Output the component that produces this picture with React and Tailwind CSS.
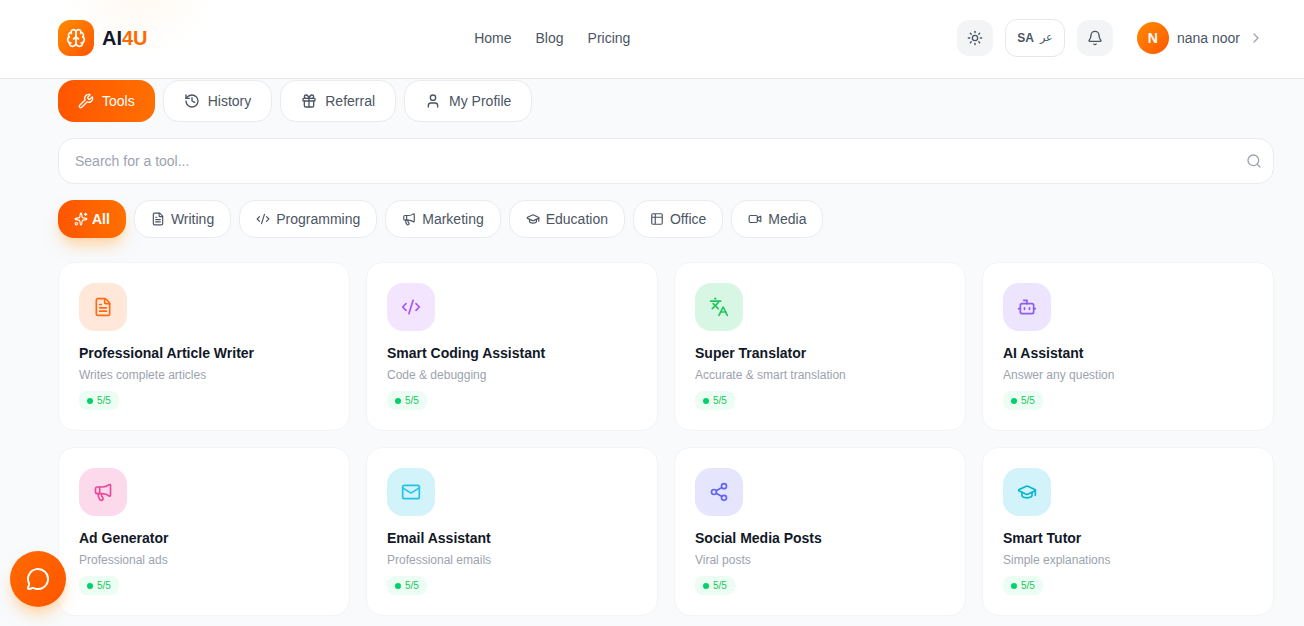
import React from "react";
import { Brain, Wrench, History, Gift, User, Search, Sparkles, FileText, CodeXml, Megaphone, GraduationCap, Table2, Video, Languages, Bot, Mail, Share2, MessageCircle, Sun, Bell, ChevronRight } from "lucide-react";

const tabs = [
  ["Tools", Wrench, true],
  ["History", History],
  ["Referral", Gift],
  ["My Profile", User],
];

const cats = [
  ["All", Sparkles, true],
  ["Writing", FileText],
  ["Programming", CodeXml],
  ["Marketing", Megaphone],
  ["Education", GraduationCap],
  ["Office", Table2],
  ["Media", Video],
];

const tools = [
  ["Professional Article Writer", "Writes complete articles", FileText, "bg-[#ffe7d9]", "text-[#ff6a13]"],
  ["Smart Coding Assistant", "Code & debugging", CodeXml, "bg-[#f3e5fe]", "text-[#a855f7]"],
  ["Super Translator", "Accurate & smart translation", Languages, "bg-[#d8f6e4]", "text-[#22c55e]"],
  ["AI Assistant", "Answer any question", Bot, "bg-[#ede4fe]", "text-[#8b5cf6]"],
  ["Ad Generator", "Professional ads", Megaphone, "bg-[#fdd9ec]", "text-[#ec4899]"],
  ["Email Assistant", "Professional emails", Mail, "bg-[#d3f3fb]", "text-[#22c3e6]"],
  ["Social Media Posts", "Viral posts", Share2, "bg-[#e6e5fe]", "text-[#6366f1]"],
  ["Smart Tutor", "Simple explanations", GraduationCap, "bg-[#d3f3fb]", "text-[#06b6d4]"],
];

function Card({ title, desc, Icon, bg, fg }) {
  return (
    <div className="h-[169px] rounded-2xl border border-[#f3f4f6] bg-white px-5 pt-5">
      <div className={`flex h-12 w-12 items-center justify-center rounded-2xl ${bg}`}>
        <Icon className={`h-5 w-5 ${fg}`} strokeWidth={2} />
      </div>
      <div className="mt-3 text-sm leading-5 font-bold text-[#111827]">{title}</div>
      <div className="mt-1 text-xs leading-4 text-[#9ca3af]">{desc}</div>
      <div className="mt-[8px] flex h-[19px] w-10 items-center gap-1 rounded-lg bg-[#ecfdf3] px-2 text-[10px] text-[#22c55e]">
        <span className="h-[6px] w-[6px] shrink-0 rounded-full bg-[#00d26a]" />
        5/5
      </div>
    </div>
  );
}

export default function App() {
  return (
    <div className="relative h-[626px] w-[1304px] overflow-hidden bg-[#f8fafc] font-['Liberation_Sans',sans-serif]">
      <header className="relative flex h-[79px] items-center justify-between overflow-hidden border-b border-[#e5e7eb] bg-white pr-[30px] pb-[2px] pl-[58px]">
        <div className="absolute -top-8 left-[100px] h-12 w-20 rounded-full bg-[#ffedd5] opacity-50 blur-xl" />
        <div className="relative flex items-center gap-2">
          <div className="flex h-9 w-9 items-center justify-center rounded-xl bg-gradient-to-br from-[#ff8a00] to-[#ff5500]">
            <Brain className="h-5 w-5 text-white" strokeWidth={2} />
          </div>
          <div className="text-xl font-bold text-[#111827]">
            AI<span className="text-[#ff6a00]">4U</span>
          </div>
        </div>
        <nav className="flex items-center gap-6 text-sm text-[#4b5563]">
          <span>Home</span>
          <span>Blog</span>
          <span>Pricing</span>
        </nav>
        <div className="flex items-center">
          <button className="flex h-9 w-9 items-center justify-center rounded-xl bg-[#f3f4f6] text-[#4b5563]">
            <Sun className="h-4 w-4" />
          </button>
          <button className="ml-3 flex h-[38px] w-[60px] items-center justify-center gap-[6px] rounded-xl border border-[#e5e7eb] bg-white text-xs text-[#4b5563]">
            <span className="font-bold">SA</span>
            <span className="font-['DejaVu_Sans',sans-serif] text-[11px]">عر</span>
          </button>
          <button className="ml-3 flex h-9 w-9 items-center justify-center rounded-xl bg-[#f3f4f6] text-[#4b5563]">
            <Bell className="h-4 w-4" />
          </button>
          <div className="ml-6 flex items-center gap-2 pr-[10px]">
            <div className="flex h-8 w-8 items-center justify-center rounded-full bg-gradient-to-br from-[#ff8a00] to-[#ff5500] text-sm font-bold text-white">N</div>
            <span className="text-sm text-[#4b5563]">nana noor</span>
            <ChevronRight className="h-4 w-4 text-[#9ca3af]" />
          </div>
        </div>
      </header>

      <main className="pr-[30px] pl-[58px]">
        <div className="mt-px flex gap-2">
          {tabs.map(([label, Icon, active]) => (
            <div
              key={label}
              className={
                active
                  ? "flex h-[42px] items-center gap-2 rounded-2xl bg-gradient-to-r from-[#ff5500] to-[#ff6f00] px-5 text-sm font-medium text-white"
                  : "flex h-[42px] items-center gap-2 rounded-2xl border border-[#e9ebef] bg-white px-5 text-sm text-[#4b5563]"
              }
            >
              <Icon className="h-4 w-4" />
              {label}
            </div>
          ))}
        </div>

        <div className="mt-4 flex h-[46px] items-center justify-between rounded-2xl border border-[#e9ebef] bg-white pr-[11px] pl-4 text-sm text-[#9ca3af]">
          <span>Search for a tool...</span>
          <Search className="h-4 w-4" />
        </div>

        <div className="mt-4 flex gap-2">
          {cats.map(([label, Icon, active]) => (
            <div
              key={label}
              className={
                active
                  ? "flex h-[38px] items-center gap-1 rounded-2xl bg-gradient-to-r from-[#ff5500] to-[#ff6f00] px-4 text-sm font-bold text-white shadow-lg shadow-orange-200"
                  : "flex h-[38px] items-center gap-[6px] rounded-2xl border border-[#e9ebef] bg-white px-4 text-sm text-[#4b5563]"
              }
            >
              <Icon className="h-[14px] w-[14px]" />
              {label}
            </div>
          ))}
        </div>

        <div className="mt-6 grid grid-cols-4 gap-4">
          {tools.map(([title, desc, Icon, bg, fg]) => (
            <Card key={title} title={title} desc={desc} Icon={Icon} bg={bg} fg={fg} />
          ))}
        </div>
      </main>

      <button className="absolute top-[551px] left-[10px] flex h-14 w-14 items-center justify-center rounded-full bg-gradient-to-br from-[#ff6a00] to-[#ff5500] text-white shadow-lg shadow-orange-200">
        <MessageCircle className="h-6 w-6" />
      </button>
    </div>
  );
}
